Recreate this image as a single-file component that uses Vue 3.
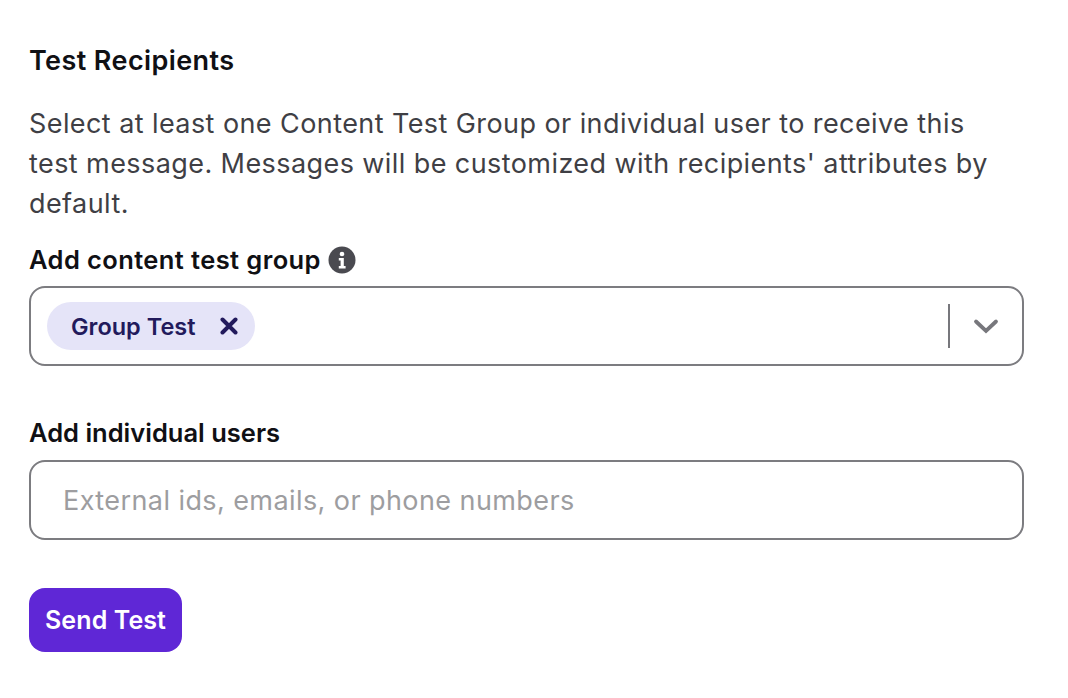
<template>
  <div class="panel">
    <h2 class="heading">Test Recipients</h2>
    <p class="intro">
      Select at least one Content Test Group or individual user to receive this test message. Messages will be customized with recipients' attributes by default.
    </p>

    <div class="label-row">
      <label class="label label-group">Add content test group</label>
      <svg class="info" viewBox="0 0 28 28" width="28" height="28">
        <circle cx="14" cy="14" r="13.5" fill="#4a4a50" />
        <circle cx="14" cy="8" r="2.3" fill="#fff" />
        <path d="M10.8 12h5v8h1.8v2.6h-6.8V20h1.8v-5.400h-1.800z" fill="#fff" />
      </svg>
    </div>
    <div class="select">
      <div class="select-value">
        <span class="chip">
          <span class="chip-text">Group Test</span>
          <svg class="chip-x" viewBox="0 0 18 18" width="18" height="18">
            <path d="M2.500 2.500l13 13M15.500 2.500l-13 13" stroke="#221a5c" stroke-width="4" stroke-linecap="round" fill="none" />
          </svg>
        </span>
      </div>
      <span class="divider"></span>
      <span class="caret">
        <svg viewBox="0 0 26 16" width="26" height="16">
          <path d="M3 3.500l10 9.500 10-9.500" stroke="#77777c" stroke-width="3.800" stroke-linecap="round" fill="none" />
        </svg>
      </span>
    </div>

    <label class="label label-users">Add individual users</label>
    <input class="field" type="text" placeholder="External ids, emails, or phone numbers" />

    <button class="send" type="button">Send Test</button>
  </div>
</template>

<script setup>
</script>

<style>
html, body {
  margin: 0;
  background: #fff;
}
</style>

<style scoped>
.panel {
  width: 1068px;
  height: 698px;
  box-sizing: border-box;
  padding: 44px 44px 0 29px;
  font-family: Inter, "Liberation Sans", sans-serif;
  color: #3f3f45;
}

.heading {
  margin: 0;
  font-size: 27px;
  line-height: 34px;
  font-weight: 600;
  letter-spacing: 0.4px;
  color: #101014;
}

.intro {
  max-width: 975px;
  margin: 26px 0 0;
  font-size: 27px;
  line-height: 40px;
  letter-spacing: 0.42px;
}

.label-row {
  display: flex;
  align-items: center;
  gap: 7px;
  margin-top: 16px;
  height: 40px;
}

.label {
  font-size: 25.5px;
  line-height: 34px;
  font-weight: 600;
  color: #101014;
}

.label-group {
  letter-spacing: 0.4px;
}

.select {
  display: flex;
  align-items: center;
  height: 80px;
  box-sizing: border-box;
  margin-top: 6px;
  border: 2px solid #7c7c80;
  border-radius: 16px;
}

.select-value {
  flex: 1;
  padding-left: 16px;
}

.chip {
  display: inline-flex;
  align-items: center;
  gap: 25px;
  height: 48px;
  padding: 0 17px 0 24px;
  border-radius: 24px;
  background: #e5e4f8;
  color: #221a5c;
  font-size: 23.5px;
  font-weight: 600;
}

.divider {
  width: 2px;
  height: 44px;
  background: #77777c;
}

.caret {
  display: flex;
  justify-content: center;
  width: 72px;
}

.label-users {
  display: block;
  margin-top: 50px;
}

.field {
  display: block;
  width: 100%;
  height: 80px;
  box-sizing: border-box;
  margin-top: 10px;
  padding: 0 32px;
  border: 2px solid #7c7c80;
  border-radius: 16px;
  font: inherit;
  font-size: 27px;
  letter-spacing: 0.42px;
  outline: none;
}

.field::placeholder {
  color: #9d9da0;
  opacity: 1;
}

.send {
  display: block;
  height: 64px;
  margin-top: 48px;
  padding: 0 16px;
  border: 0;
  border-radius: 16px;
  background: #5f27d6;
  color: #fff;
  font: inherit;
  font-size: 25px;
  font-weight: 600;
  letter-spacing: 0.1px;
}
</style>
